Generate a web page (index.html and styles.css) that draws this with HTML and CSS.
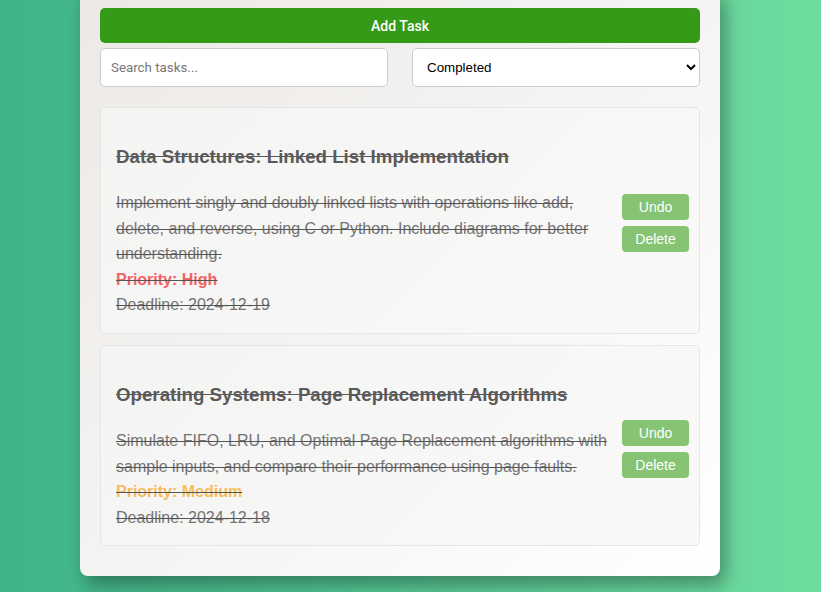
FILE: index.html
```html
<!DOCTYPE html>
<html lang="en">
<head>
<meta charset="UTF-8">
<title>Task Manager</title>
<link rel="stylesheet" href="styles.css">
</head>
<body>
<main class="container">
  <button class="add-btn">Add Task</button>
  <div class="filters">
    <input class="search" type="text" placeholder="Search tasks...">
    <select class="filter">
      <option>All</option>
      <option>Pending</option>
      <option selected>Completed</option>
    </select>
  </div>
  <ul class="tasks">
    <li class="task done">
      <div class="task-body">
        <h3 class="task-title">Data Structures: Linked List Implementation</h3>
        <p class="task-desc">Implement singly and doubly linked lists with operations like add, delete, and reverse, using C or Python. Include diagrams for better understanding.</p>
        <p class="priority high">Priority: High</p>
        <p class="deadline">Deadline: 2024-12-19</p>
      </div>
      <div class="actions">
        <button class="act">Undo</button>
        <button class="act">Delete</button>
      </div>
    </li>
    <li class="task done">
      <div class="task-body">
        <h3 class="task-title">Operating Systems: Page Replacement Algorithms</h3>
        <p class="task-desc">Simulate FIFO, LRU, and Optimal Page Replacement algorithms with sample inputs, and compare their performance using page faults.</p>
        <p class="priority medium">Priority: Medium</p>
        <p class="deadline">Deadline: 2024-12-18</p>
      </div>
      <div class="actions">
        <button class="act">Undo</button>
        <button class="act">Delete</button>
      </div>
    </li>
  </ul>
</main>
</body>
</html>
```
FILE: styles.css
```css
* { box-sizing: border-box; }
html, body { height: 100%; }
body {
  margin: 0;
  overflow: hidden;
  font-family: "Liberation Sans", Arial, sans-serif;
  background: linear-gradient(to right, #3fb489, #6fdc9f);
}
.container {
  width: 640px;
  margin: -12px 0 0 80px;
  padding: 20px 20px 20px;
  background: linear-gradient(135deg, #ece9e6, #ffffff);
  border-radius: 8px;
  box-shadow: 5px 9px 18px rgba(0, 0, 0, 0.35);
}
.add-btn {
  display: block;
  width: 100%;
  height: 35px;
  border: none;
  border-radius: 5px;
  background: #359a18;
  color: #fff;
  font-family: Roboto, "Liberation Sans", sans-serif;
  font-size: 14px;
  font-weight: 500;
}
.filters {
  display: flex;
  justify-content: space-between;
  margin-top: 5px;
}
.search, .filter {
  width: 288px;
  height: 39px;
  border: 1px solid #ccc;
  border-radius: 5px;
  background: #fff;
  font-size: 13.33px;
}
.search {
  padding: 0 10px;
  font-family: Roboto, "Liberation Sans", sans-serif;
}
.search::placeholder { color: #777; }
.filter {
  padding: 0 10px;
  font-family: "Liberation Sans", Arial, sans-serif;
  color: #000;
}
.tasks {
  list-style: none;
  margin: 20px 0 0;
  padding: 0;
}
.task {
  display: flex;
  align-items: center;
  padding: 15px 10px 15px 15px;
  margin-bottom: 11px;
  background: linear-gradient(135deg, #f4f4f3, #f9f9f9);
  border: 1px solid #e6e6e6;
  border-radius: 5px;
}
.task:last-child { margin-bottom: 10px; }
.task-body { flex: 1; }
.task-title {
  margin: 23px 0 22px;
  font-size: 18.72px;
  color: #5a5a5a;
  text-decoration: line-through;
}
.task-body p {
  margin: 0;
  font-size: 16px;
  line-height: 25.6px;
  color: #737373;
  text-decoration: line-through;
  text-decoration-color: #555;
}
.task-body .priority { font-weight: bold; }
.priority.high { color: #f26464; }
.priority.medium { color: #f5bd5e; }
.actions {
  display: flex;
  flex-direction: column;
  gap: 6px;
  margin: 6px 0 0 12px;
}
.act {
  width: 67px;
  height: 26px;
  border: none;
  border-radius: 4px;
  background: #86c473;
  color: #fff;
  font-family: "Liberation Sans", Arial, sans-serif;
  font-size: 14px;
}
```
